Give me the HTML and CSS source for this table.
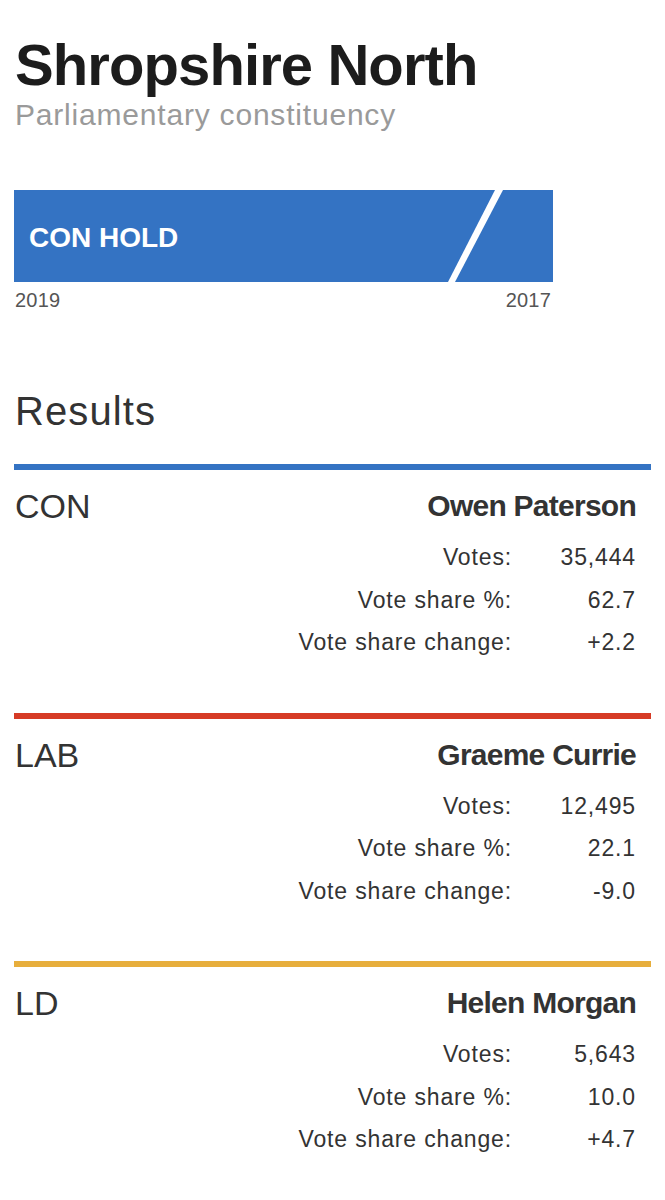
FILE: index.html
```html
<!DOCTYPE html>
<html lang="en">
<head>
<meta charset="utf-8">
<title>Shropshire North</title>
<link rel="stylesheet" href="styles.css">
</head>
<body>
<main class="page">
  <h1 class="title">Shropshire North</h1>
  <p class="subtitle">Parliamentary constituency</p>

  <div class="banner">
    <span class="banner-text">CON HOLD</span>
    <svg class="slash" width="539" height="92" viewBox="0 0 539 92" aria-hidden="true">
      <polygon points="481,0 489,0 441,92 434,92" fill="#ffffff"/>
    </svg>
  </div>
  <div class="years">
    <span>2019</span>
    <span>2017</span>
  </div>

  <h2 class="results-title">Results</h2>

  <section class="result con">
    <div class="rule"></div>
    <div class="head">
      <span class="party">CON</span>
      <span class="name">Owen Paterson</span>
    </div>
    <div class="stats">
      <span class="label">Votes:</span><span class="value">35,444</span>
      <span class="label">Vote share %:</span><span class="value">62.7</span>
      <span class="label">Vote share change:</span><span class="value">+2.2</span>
    </div>
  </section>

  <section class="result lab">
    <div class="rule"></div>
    <div class="head">
      <span class="party">LAB</span>
      <span class="name">Graeme Currie</span>
    </div>
    <div class="stats">
      <span class="label">Votes:</span><span class="value">12,495</span>
      <span class="label">Vote share %:</span><span class="value">22.1</span>
      <span class="label">Vote share change:</span><span class="value">-9.0</span>
    </div>
  </section>

  <section class="result ld">
    <div class="rule"></div>
    <div class="head">
      <span class="party">LD</span>
      <span class="name">Helen Morgan</span>
    </div>
    <div class="stats">
      <span class="label">Votes:</span><span class="value">5,643</span>
      <span class="label">Vote share %:</span><span class="value">10.0</span>
      <span class="label">Vote share change:</span><span class="value">+4.7</span>
    </div>
  </section>
</main>
</body>
</html>
```
FILE: styles.css
```css
html, body {
  margin: 0;
  padding: 0;
  background: #ffffff;
}

body {
  font-family: "Liberation Sans", Arial, sans-serif;
  color: #333333;
}

.page {
  padding: 36px 14px 0 14px;
}

.title {
  margin: 0;
  font-size: 58px;
  line-height: 58px;
  font-weight: 700;
  letter-spacing: -0.9px;
  color: #1c1c1c;
  padding-left: 1px;
}

.subtitle {
  margin: 6px 0 0 0;
  font-size: 30px;
  line-height: 30px;
  letter-spacing: 0.8px;
  color: #9a9a9a;
  padding-left: 1px;
}

.banner {
  position: relative;
  margin-top: 60px;
  width: 539px;
  height: 92px;
  background: #3473c3;
  display: flex;
  align-items: center;
  padding-left: 15px;
  box-sizing: border-box;
}

.banner-text {
  font-size: 28px;
  font-weight: 700;
  color: #ffffff;
  line-height: 28px;
  padding-top: 3px;
}

.slash {
  position: absolute;
  left: 0;
  top: 0;
}

.years {
  width: 539px;
  display: flex;
  justify-content: space-between;
  margin-top: 8px;
  font-size: 20px;
  line-height: 20px;
  letter-spacing: 0.2px;
  color: #555555;
  padding: 0 2px 0 1px;
  box-sizing: border-box;
}

.results-title {
  margin: 81px 0 0 0;
  font-size: 40px;
  line-height: 40px;
  font-weight: 400;
  letter-spacing: 1.1px;
  color: #333333;
  padding-left: 1px;
}

.result {
  margin-top: 33px;
}

.result + .result {
  margin-top: 49px;
}

.rule {
  height: 6px;
}

.con .rule { background: #3473c3; }
.lab .rule { background: #d63b26; }
.ld .rule { background: #e7ae3c; }

.head {
  display: flex;
  justify-content: space-between;
  align-items: flex-start;
  margin-top: 19px;
  padding: 0 15px 0 1px;
}

.party {
  font-size: 34px;
  line-height: 34px;
  color: #333333;
}

.name {
  font-size: 30px;
  line-height: 34px;
  font-weight: 700;
  letter-spacing: -0.75px;
  color: #333333;
}

.stats {
  display: grid;
  grid-template-columns: auto 124px;
  justify-content: end;
  margin-top: 13px;
  padding-right: 15px;
  font-size: 23px;
  line-height: 42.5px;
  letter-spacing: 0.85px;
  color: #333333;
  text-align: right;
}
```
